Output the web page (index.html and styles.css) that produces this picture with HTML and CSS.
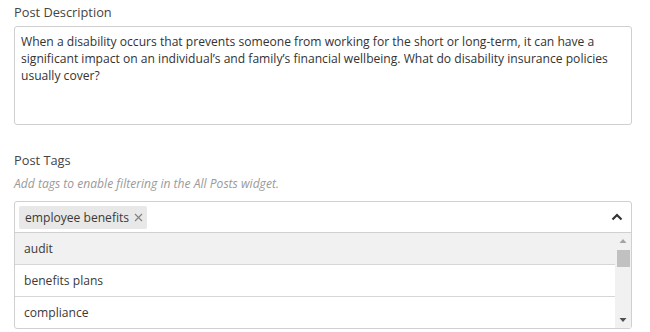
FILE: index.html
```html
<!DOCTYPE html>
<html>
<head>
<meta charset="utf-8">
<link rel="stylesheet" href="styles.css">
</head>
<body>
<div class="form">
  <div class="field">
    <div class="label">Post Description</div>
    <div class="textarea">When a disability occurs that prevents someone from working for the short or long-term, it can have a significant impact on an individual’s and family’s financial wellbeing. What do disability insurance policies usually cover?</div>
  </div>
  <div class="field tags-field">
    <div class="label">Post Tags</div>
    <div class="help">Add tags to enable filtering in the All Posts widget.</div>
    <div class="select">
      <div class="control">
        <span class="chip">employee benefits<svg class="x" width="9" height="9" viewBox="0 0 9 9"><path d="M1 1 L8 8 M8 1 L1 8" stroke="#808080" stroke-width="1.1" fill="none"/></svg></span>
        <svg class="caret" width="12" height="8" viewBox="0 0 12 8"><path d="M1.5 6.5 L6 2 L10.5 6.5" fill="none" stroke="#333" stroke-width="2.2"/></svg>
      </div>
      <div class="menu">
        <div class="options">
          <div class="option active">audit</div>
          <div class="option">benefits plans</div>
          <div class="option">compliance</div>
        </div>
        <div class="scrollbar">
          <svg class="arrow" width="8" height="6" viewBox="0 0 8 6"><path d="M0.5 5 L4 1 L7.5 5 Z" fill="#a3a3a3"/></svg>
          <div class="track"><div class="thumb"></div></div>
          <svg class="arrow" width="8" height="6" viewBox="0 0 8 6"><path d="M0.5 1 L4 5 L7.5 1 Z" fill="#505050"/></svg>
        </div>
      </div>
    </div>
  </div>
</div>
</body>
</html>
```
FILE: styles.css
```css
html, body { margin: 0; padding: 0; background: #fff; }
body {
  font-family: "Open Sans", "Liberation Sans", sans-serif;
  color: #333;
}
.form { width: 618px; padding: 3px 0 0 14px; }
.label { font-size: 12.8px; line-height: 18px; color: #444; }
.textarea {
  margin-top: 5px;
  box-sizing: border-box;
  height: 99px;
  border: 1px solid #cfcfcf;
  border-radius: 3px;
  padding: 6px 6px;
  font-size: 12.1px;
  line-height: 17px;
  color: #333;
}
.tags-field { margin-top: 26px; }
.help { font-style: italic; font-size: 12.1px; line-height: 17px; color: #9a9a9a; margin-top: 6px; }
.select {
  margin-top: 9px;
  border: 1px solid #d0d0d0;
  border-radius: 3px;
}
.control {
  height: 30px;
  display: flex;
  align-items: center;
  padding: 0 8px 0 4px;
  border-bottom: 1px solid #d0d0d0;
}
.chip {
  display: flex;
  align-items: center;
  background: #e8e8e8;
  border-radius: 2px;
  height: 23px;
  padding: 0 4px 0 6px;
  font-size: 12.1px;
  color: #3a3a3a;
}
.chip .x { margin-left: 5px; }
.caret { margin-left: auto; }
.menu { display: flex; height: 95px; }
.options { flex: 1; }
.option {
  height: 31px;
  line-height: 31px;
  padding-left: 9px;
  font-size: 12.1px;
  color: #3a3a3a;
  border-bottom: 1px solid #d6d6d6;
}
.option:last-child { border-bottom: none; }
.option.active { background: #f1f1f1; }
.scrollbar {
  width: 16px;
  background: #f1f1f1;
  display: flex;
  flex-direction: column;
  align-items: center;
}
.arrow { margin: 5px 0; }
.track { flex: 1; width: 100%; display: flex; justify-content: center; }
.thumb { width: 13px; height: 17px; background: #c1c1c1; margin-top: 1px; }
```
